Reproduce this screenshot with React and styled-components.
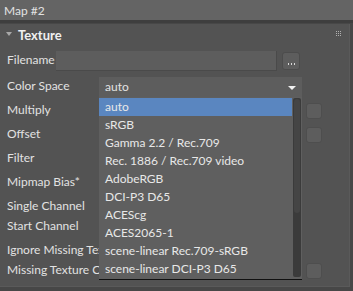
import React from "react";
import styled, { createGlobalStyle } from "styled-components";

const GlobalStyle = createGlobalStyle`
	html, body {
		margin: 0;
		padding: 0;
		background: #474747;
		font-family: Lato, "Noto Sans", sans-serif;
		font-size: 12px;
		color: #e2e2e2;
		overflow: hidden;
	}
`;

const Window = styled.div`
	width: 353px;
	height: 291px;
	display: flex;
	flex-direction: column;
	background: #474747;
`;

const TitleBar = styled.div`
	height: 20px;
	flex: none;
	display: flex;
	align-items: center;
	padding-left: 4px;
	background: #646464;
	border-bottom: 3px solid #3e3e3e;
`;

const Panel = styled.div`
	position: relative;
	height: 262px;
	margin-right: 3px;
	margin-top: 1px;
	background: #535353;
	border-right: 1px solid #5a5a5a;
	border-bottom: 1px solid #5a5a5a;
	display: flex;
	flex-direction: column;
`;

const SectionHead = styled.div`
	height: 22px;
	display: flex;
	align-items: center;
	padding: 0 8px 0 6px;
	gap: 6px;

	b {
		font-size: 13px;
		font-weight: 700;
		color: #f0f0f0;
		flex: 1;
		padding-bottom: 1px;
	}
`;

const Caret = styled.span`
	width: 0;
	height: 0;
	border-left: 3px solid transparent;
	border-right: 3px solid transparent;
	border-top: 4px solid #a8a8a8;
	margin-bottom: 2px;
`;

const Dots = styled.span`
	display: grid;
	grid-template-columns: repeat(3, 1px);
	gap: 1px;
	margin-bottom: 4px;

	i {
		width: 1px;
		height: 1px;
		background: #b0b0b0;
	}
`;

const Row = styled.div`
	height: ${(p) => p.$h || 24}px;
	margin-top: ${(p) => p.$mt || 0}px;
	display: flex;
	align-items: center;
	padding-left: 7px;
`;

const Label = styled.span`
	width: ${(p) => p.$w || 92}px;
	flex: none;
	white-space: nowrap;
	overflow: hidden;
	padding-bottom: 4px;
`;

const TextInput = styled.div`
	width: 221px;
	height: 20px;
	background: #5d5d5d;
	border-right: 1px solid #4a4a4a;
	border-bottom: 1px solid #4a4a4a;
	box-sizing: border-box;
`;

const BrowseButton = styled.div`
	width: 18px;
	height: 18px;
	margin-left: 5px;
	border-radius: 3px;
	background: #5d5d5d;
	border: 1px solid #4c4c4c;
	box-sizing: border-box;
	display: flex;
	align-items: flex-end;
	justify-content: center;
	gap: 2px;
	padding-bottom: 4px;

	i {
		width: 1px;
		height: 2px;
		background: #d8d8d8;
	}
`;

const Select = styled.div`
	width: 203px;
	height: 20px;
	background: #5d5d5d;
	box-sizing: border-box;
	display: flex;
	align-items: center;
	justify-content: space-between;
	padding: 0 6px 2px 6px;
`;

const Arrow = styled.span`
	width: 0;
	height: 0;
	border-left: 4px solid transparent;
	border-right: 4px solid transparent;
	border-top: 4px solid #f2f2f2;
	margin-top: 3px;
`;

const Spacer = styled.span`
	width: 207px;
	flex: none;
`;

const SmallButton = styled.div`
	width: 16px;
	height: 16px;
	border-radius: 3px;
	background: #5d5d5d;
	border: 1px solid #4e4e4e;
	box-sizing: border-box;
`;

const Dropdown = styled.div`
	position: absolute;
	left: 99px;
	top: 73px;
	width: 203px;
	height: 182px;
	background: #5f5f5f;
	display: flex;
	box-shadow: 0 1px 0 #111;
`;

const List = styled.div`
	flex: 1;
	padding-top: 1px;
	display: flex;
	flex-direction: column;
`;

const Item = styled.div`
	height: 18px;
	display: flex;
	align-items: center;
	padding: 0 6px 2px;
	white-space: nowrap;
	overflow: hidden;
	color: #e8e8e8;
	background: ${(p) => (p.$active ? "#5a86c0" : "transparent")};
`;

const Scrollbar = styled.div`
	width: 8px;
	margin: 1px 1px 2px 1px;
	background: #3b3b3b;
	border-radius: 2px;
	display: flex;
	flex-direction: column;

	span {
		height: 114px;
		margin: 1px;
		border-radius: 3px;
		background: #454545;
	}
`;

const items = [
	"auto",
	"sRGB",
	"Gamma 2.2 / Rec.709",
	"Rec. 1886 / Rec.709 video",
	"AdobeRGB",
	"DCI-P3 D65",
	"ACEScg",
	"ACES2065-1",
	"scene-linear Rec.709-sRGB",
	"scene-linear DCI-P3 D65",
];

const rows = [
	{ label: "Multiply", btn: true },
	{ label: "Offset", btn: true },
	{ label: "Filter" },
	{ label: "Mipmap Bias*" },
	{ label: "Single Channel", h: 20, mt: 2 },
	{ label: "Start Channel", h: 20 },
	{ label: "Ignore Missing Textures", h: 20, mt: 4 },
	{ label: "Missing Texture Color", h: 20, btn: true },
];

const App = () => {
	return (
		<Window>
			<GlobalStyle />
			<TitleBar>Map #2</TitleBar>
			<Panel>
				<SectionHead>
					<Caret />
					<b>Texture</b>
					<Dots>
						{Array.from({ length: 9 }).map((_, i) => (
							<i key={i} />
						))}
					</Dots>
				</SectionHead>
				<Row $mt={3}>
					<Label $w={49}>Filename</Label>
					<TextInput />
					<BrowseButton>
						<i />
						<i />
						<i />
					</BrowseButton>
				</Row>
				<Row $mt={2}>
					<Label>Color Space</Label>
					<Select>
						auto
						<Arrow />
					</Select>
				</Row>
				{rows.map((r) => (
					<Row key={r.label} $h={r.h} $mt={r.mt}>
						<Label>{r.label}</Label>
						<Spacer />
						{r.btn && <SmallButton />}
					</Row>
				))}
				<Dropdown>
					<List>
						{items.map((it, i) => (
							<Item key={it} $active={i === 0}>
								{it}
							</Item>
						))}
					</List>
					<Scrollbar>
						<span />
					</Scrollbar>
				</Dropdown>
			</Panel>
		</Window>
	);
};

export default App;
